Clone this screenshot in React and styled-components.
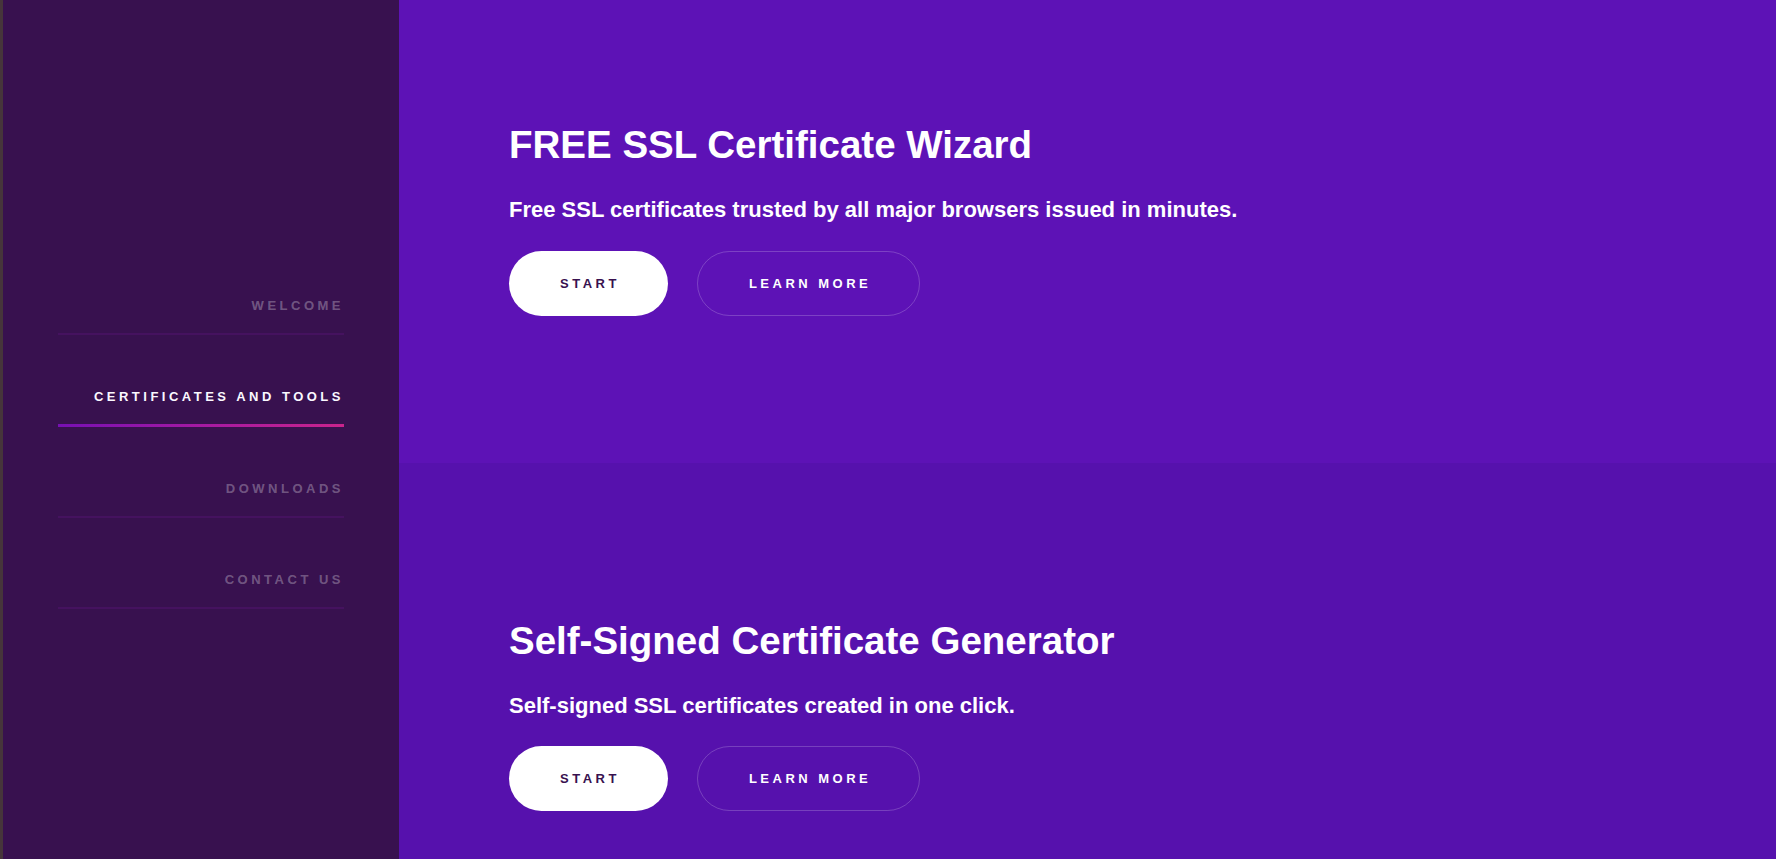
import styled, { createGlobalStyle } from "styled-components";

const GlobalStyle = createGlobalStyle`
    html, body {
        margin: 0;
        padding: 0;
        height: 100%;
        overflow: hidden;
    }
    body {
        font-family: "Liberation Sans", Arial, sans-serif;
        background: #38114f;
    }
`;

const NAV_ITEMS = [
    { label: "WELCOME" },
    { label: "CERTIFICATES AND TOOLS", active: true },
    { label: "DOWNLOADS" },
    { label: "CONTACT US" },
];

const SECTIONS = [
    {
        title: "FREE SSL Certificate Wizard",
        text: "Free SSL certificates trusted by all major browsers issued in minutes.",
        bg: "#5d12b6",
        top: 122,
    },
    {
        title: "Self-Signed Certificate Generator",
        text: "Self-signed SSL certificates created in one click.",
        bg: "#5611ad",
        top: 155,
    },
];

export default function App() {
    return (
        <>
            <GlobalStyle />
            <Page>
                <Sidebar>
                    <Nav>
                        {NAV_ITEMS.map((item) => (
                            <NavItem key={item.label}>
                                <NavLabel $active={item.active}>
                                    {item.label}
                                </NavLabel>
                                <Underline $active={item.active} />
                            </NavItem>
                        ))}
                    </Nav>
                </Sidebar>
                <Main>
                    {SECTIONS.map((section) => (
                        <Section
                            key={section.title}
                            $bg={section.bg}
                            $top={section.top}
                        >
                            <Title>{section.title}</Title>
                            <Lead>{section.text}</Lead>
                            <Actions>
                                <PrimaryButton>START</PrimaryButton>
                                <GhostButton>LEARN MORE</GhostButton>
                            </Actions>
                        </Section>
                    ))}
                </Main>
            </Page>
        </>
    );
}

const Page = styled.div`
    display: flex;
    height: 100vh;
    overflow: hidden;
`;

const Sidebar = styled.aside`
    flex: 0 0 399px;
    background: #38114f;
    border-left: 3px solid #46353b;
    padding: 298px 55px 0;
    box-sizing: border-box;
`;

const Nav = styled.nav`
    display: flex;
    flex-direction: column;
    gap: 54px;
`;

const NavItem = styled.div`
    display: flex;
    flex-direction: column;
    align-items: flex-end;
    gap: 19px;
`;

const NavLabel = styled.span`
    font-size: 13px;
    line-height: 16px;
    font-weight: 700;
    letter-spacing: 3.5px;
    color: ${(p) => (p.$active ? "#fbf8ff" : "rgba(255, 255, 255, 0.3)")};
`;

const Underline = styled.div`
    align-self: stretch;
    height: ${(p) => (p.$active ? "3px" : "2px")};
    background: ${(p) =>
        p.$active
            ? "linear-gradient(90deg, #7710b3 0%, #a51aa2 50%, #c9248c 100%)"
            : "#45125f"};
`;

const Main = styled.main`
    flex: 1;
    display: flex;
    flex-direction: column;
    overflow: hidden;
`;

const Section = styled.section`
    background: ${(p) => p.$bg};
    padding: ${(p) => p.$top}px 110px 147px;
    display: flex;
    flex-direction: column;
    align-items: flex-start;
`;

const Title = styled.h1`
    margin: 0;
    font-size: 38.5px;
    line-height: 1.2;
    font-weight: 700;
    color: #ffffff;
`;

const Lead = styled.p`
    margin: 29px 0 0;
    font-size: 22px;
    line-height: 1.2;
    font-weight: 700;
    color: #ffffff;
`;

const Actions = styled.div`
    display: flex;
    gap: 29px;
    margin-top: 27px;
`;

const BaseButton = styled.button`
    height: 65px;
    border-radius: 33px;
    padding: 0 48px 0 51px;
    font-family: "Liberation Sans", Arial, sans-serif;
    font-size: 13px;
    font-weight: 700;
    letter-spacing: 3.5px;
    cursor: pointer;
    box-sizing: border-box;
`;

const PrimaryButton = styled(BaseButton)`
    background: #ffffff;
    color: #38114f;
    border: none;
`;

const GhostButton = styled(BaseButton)`
    background: transparent;
    color: #ffffff;
    border: 1px solid rgba(255, 255, 255, 0.2);
`;
